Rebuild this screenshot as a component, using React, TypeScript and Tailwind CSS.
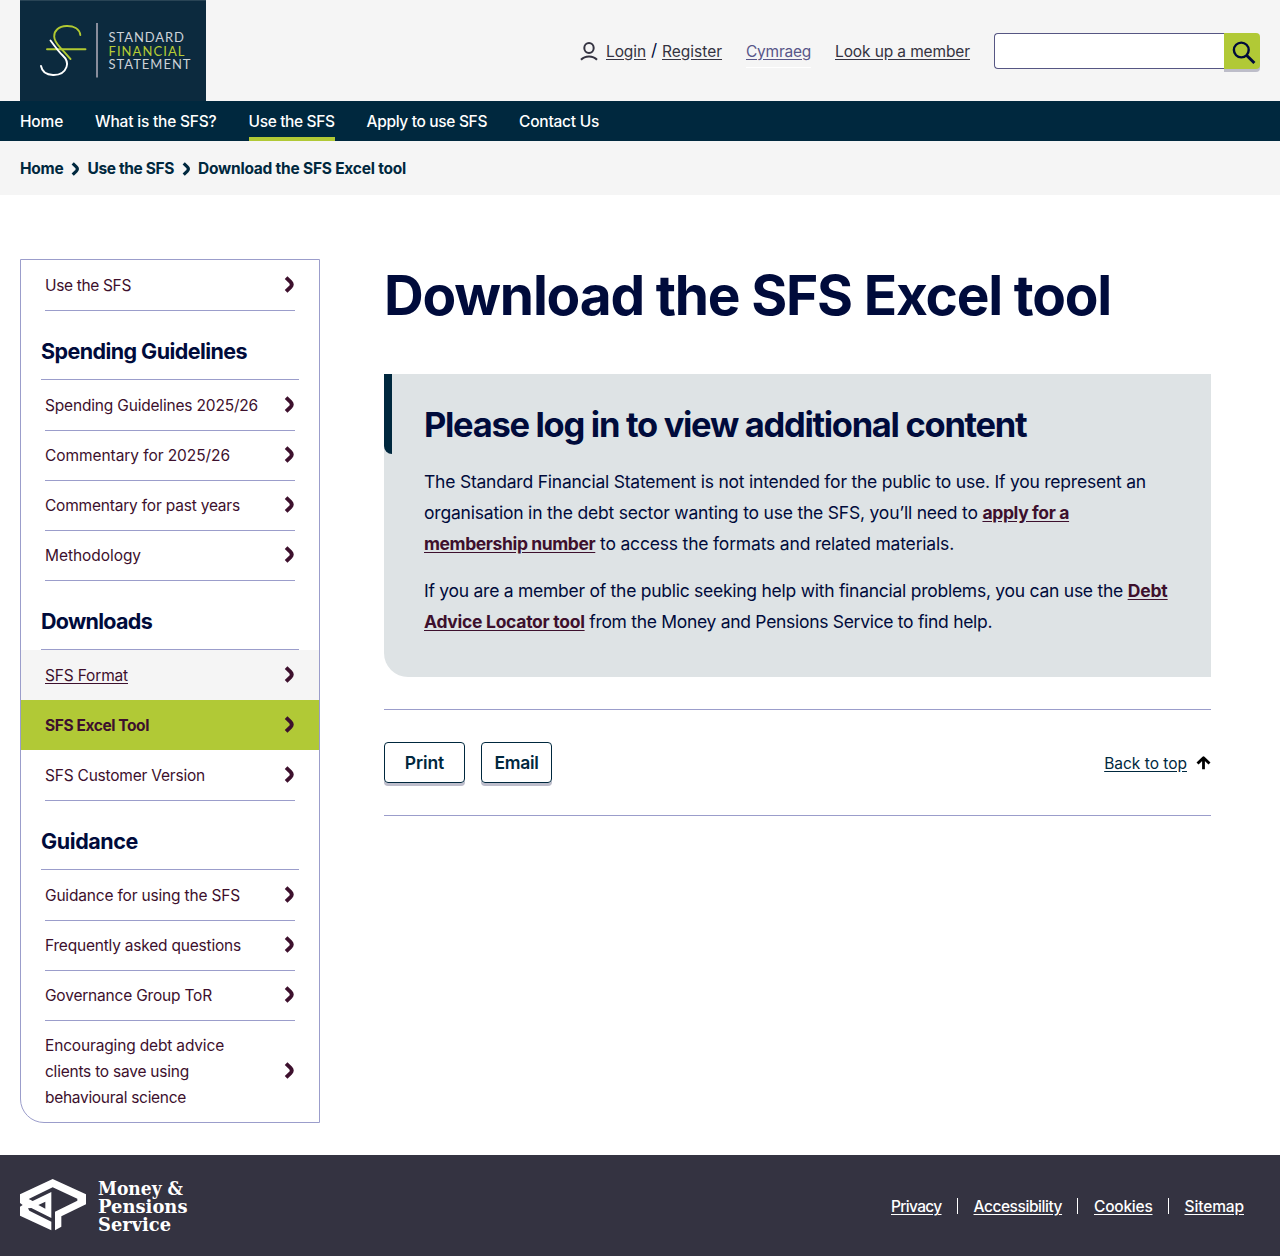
import type { ReactNode } from "react";

type Entry = { label: ReactNode; tracking: string; state?: "hover" | "active"; tall?: boolean };

const nav = [
  { label: "Home", tracking: "tracking-[-0.17px]" },
  { label: "What is the SFS?", tracking: "tracking-[-0.2px]" },
  { label: "Use the SFS", tracking: "tracking-[-0.371px]", current: true },
  { label: "Apply to use SFS", tracking: "tracking-[-0.338px]" },
  { label: "Contact Us", tracking: "tracking-[-0.239px]" },
];

const intro: Entry[] = [{ label: "Use the SFS", tracking: "tracking-[-0.345px]" }];

const sections: { title: string; tracking: string; entries: Entry[] }[] = [
  {
    title: "Spending Guidelines",
    tracking: "tracking-[-0.572px]",
    entries: [
      { label: "Spending Guidelines 2025/26", tracking: "tracking-[-0.182px]" },
      { label: "Commentary for 2025/26", tracking: "tracking-[-0.068px]" },
      { label: "Commentary for past years", tracking: "tracking-[-0.201px]" },
      { label: "Methodology", tracking: "tracking-[-0.057px]" },
    ],
  },
  {
    title: "Downloads",
    tracking: "tracking-[-0.71px]",
    entries: [
      { label: "SFS Format", tracking: "tracking-[-0.167px]", state: "hover" },
      { label: "SFS Excel Tool", tracking: "tracking-[-0.41px]", state: "active" },
      { label: "SFS Customer Version", tracking: "tracking-[-0.213px]" },
    ],
  },
  {
    title: "Guidance",
    tracking: "tracking-[-0.404px]",
    entries: [
      { label: "Guidance for using the SFS", tracking: "tracking-[-0.179px]" },
      { label: "Frequently asked questions", tracking: "tracking-[-0.208px]" },
      { label: "Governance Group ToR", tracking: "tracking-[-0.194px]" },
      {
        label: (
          <>
            <span className="tracking-[-0.16px]">Encouraging debt advice</span>
            <br />
            <span className="tracking-[-0.23px]">clients to save using</span>
            <br />
            <span className="tracking-[-0.296px]">behavioural science</span>
          </>
        ),
        tracking: "",
        tall: true,
      },
    ],
  },
];

const footerLinks = [
  { label: "Privacy", box: "w-[50.5px]", tracking: "tracking-[-0.674px]" },
  { label: "Accessibility", box: "w-[88.5px]", tracking: "tracking-[-0.44px]" },
  { label: "Cookies", box: "w-[58.5px]", tracking: "tracking-[-0.232px]" },
  { label: "Sitemap", box: "w-[59.5px]", tracking: "tracking-[-0.116px]" },
];

function Chevron({ className }: { className: string }) {
  return (
    <svg viewBox="0 0 10 17" className={className} fill="none" stroke="currentColor" strokeWidth="3.8">
      <path d="M1.6 1.6 L6 5.9 Q8.5 8.5 6 11.1 L1.6 15.4" />
    </svg>
  );
}

function SfsLogo() {
  return (
    <svg width="186" height="101" viewBox="0 0 186 101" className="block bg-[#0c2a3e]">
      <path d="M0 .5H186" stroke="#294455" />
      <g fill="none" strokeWidth="1.9" strokeLinecap="round">
        <path d="M27 49.2H65.5" stroke="#b1c932" />
        <path d="M60.3 35 C59.5 28.5 53.5 25.8 46.5 26 C38.5 26.3 34 31 34.2 36.5 C34.4 41.5 37.2 44.2 40.5 47.8 C44 51.6 47 55.5 50.5 59" stroke="#b1c932" />
        <path d="M30.5 40.5 C34 45 38 51 42.5 55.3 C46.5 59 48.2 62.5 46.5 67 C44.5 72.5 39 75.2 33 75 C26.5 74.8 22 71.5 21 66" stroke="#fff" />
      </g>
      <path d="M77 23V77.5" stroke="#b3afbc" strokeWidth="1.5" />
      <g fontFamily="Lato, sans-serif" fontSize="13" fontWeight="400">
        <text x="88.5" y="41.8" textLength="75.5" lengthAdjust="spacing" fill="#ccd2d8">STANDARD</text>
        <text x="88.5" y="55.5" textLength="76" lengthAdjust="spacing" fill="#b6cc35">FINANCIAL</text>
        <text x="88.5" y="69.1" textLength="82" lengthAdjust="spacing" fill="#ccd2d8">STATEMENT</text>
      </g>
    </svg>
  );
}

function MapsLogo() {
  return (
    <svg width="168" height="56" viewBox="0 0 168 56" className="block" fill="#fff">
      <path
        transform="translate(-4 -2) scale(.33333)"
        fillRule="evenodd"
        d="M12 55 L110 9 L210 55 V85 L136 121 V152 L117 163 V107 L184 74 V68 L110 34 L38 69 L50 75 L106 48 V126 L46 96 L36 97 L40 104 L106 137 V163 L12 119 V92 L20 87 L12 81 Z M88 77 L67 87 L88 98 Z"
      />
      <g fontFamily="'DejaVu Serif', serif" fontSize="18.2" fontWeight="700">
        <text x="78" y="16.8" textLength="85" lengthAdjust="spacingAndGlyphs">Money &amp;</text>
        <text x="78" y="34.8" textLength="89.5" lengthAdjust="spacingAndGlyphs">Pensions</text>
        <text x="78" y="52.8" textLength="73" lengthAdjust="spacingAndGlyphs">Service</text>
      </g>
    </svg>
  );
}

function SideItem({ entry, last }: { entry: Entry; last?: boolean }) {
  const bg = entry.state === "active" ? "bg-[#b1c936]" : entry.state === "hover" ? "bg-[#f5f5f5]" : "";
  const text = entry.state === "active" ? "font-bold" : entry.state === "hover" ? "underline underline-offset-2" : "";
  const line = entry.state || last ? "" : "border-b border-[#9b9dcb]";
  return (
    <li className={`px-6 ${entry.tall ? "h-[102px]" : "h-[50px]"} ${bg}`}>
      <a className={`flex items-center justify-between ${entry.tall ? "h-[102px]" : entry.state ? "h-[50px]" : "h-[51px]"} ${line}`}>
        <span className={`pt-0.5 leading-[26px] ${text} ${entry.tracking}`}>{entry.label}</span>
        <Chevron className="mb-px h-[17px] w-[11px]" />
      </a>
    </li>
  );
}

export default function App() {
  return (
    <div className="flex h-[1256px] flex-col bg-white font-['Inter',sans-serif] text-[15.5px] text-[#000b3b]">
      <header className="flex h-[101px] justify-between bg-[#f5f5f5] px-5">
        <SfsLogo />
        <div className="flex h-[102px] items-center text-[#343341]">
          <svg width="18" height="19" viewBox="0 0 18 19" fill="none" stroke="currentColor" strokeWidth="2" className="mr-2">
            <ellipse cx="9" cy="6" rx="4.7" ry="4.9" />
            <path d="M1 17.7 C5 13.4 13 13.4 17 17.7" />
          </svg>
          <a className="w-10 pt-px tracking-[-0.097px] underline underline-offset-2">Login</a>
          <span className="w-4 text-center text-[17px] text-[#000b3b]">/</span>
          <a className="w-[60px] pt-px underline underline-offset-2">Register</a>
          <a className="ml-6 h-[34px] w-[65px] border-b border-white leading-[35px] tracking-[-0.243px] text-[#585689] underline underline-offset-2">Cymraeg</a>
          <a className="ml-6 w-[135px] pt-px tracking-[-0.116px] whitespace-nowrap underline underline-offset-2">Look up a member</a>
          <div className="ml-6 flex h-9">
            <div className="w-[230px] rounded-l border border-r-0 border-[#565683] bg-white" />
            <button className="flex w-9 items-center justify-center rounded-r bg-[#b1c936] text-[#000b3b] shadow-[0_3px_0_#bdbdc9]">
              <svg width="24" height="24" viewBox="0 0 24 24" fill="none" stroke="currentColor" className="mt-[3px] ml-[3px]">
                <circle cx="9.3" cy="9" r="7.4" strokeWidth="2.4" />
                <path d="M14.5 14.3 L22.4 22" strokeWidth="3" />
              </svg>
            </button>
          </div>
        </div>
      </header>

      <nav className="flex h-10 gap-8 bg-[#00283e] px-5 font-medium text-white">
        {nav.map((n) => (
          <a key={n.label} className={`h-10 leading-[41px] whitespace-nowrap ${n.tracking} ${n.current ? "border-b-4 border-[#b1c936]" : ""}`}>
            {n.label}
          </a>
        ))}
      </nav>

      <div className="flex h-[54px] items-center bg-[#f5f5f5] px-5 pt-px font-bold text-[#00283e]">
        <span className="w-[43.5px] tracking-[-0.242px]">Home</span>
        <Chevron className="mx-[7.5px] h-[14px] w-[9px]" />
        <span className="w-[86.5px] tracking-[-0.372px]">Use the SFS</span>
        <Chevron className="mx-[7.5px] h-[14px] w-[9px]" />
        <span className="tracking-[-0.223px]">Download the SFS Excel tool</span>
      </div>

      <div className="flex flex-1 items-start px-5 pt-16">
        <aside className="w-[300px] rounded-bl-3xl border border-[#9b9dcb] text-[#3d102d]">
          <ul>
            {intro.map((e, i) => (
              <SideItem key={i} entry={e} />
            ))}
          </ul>
          {sections.map((s, si) => (
            <section key={s.title}>
              <h3 className={`mx-5 h-[70px] border-b border-[#9b9dcb] pt-[25px] text-[21.5px] leading-8 font-bold text-[#000b3b] ${s.tracking}`}>{s.title}</h3>
              <ul>
                {s.entries.map((e, i) => (
                  <SideItem key={i} entry={e} last={si === 2 && i === s.entries.length - 1} />
                ))}
              </ul>
            </section>
          ))}
        </aside>

        <main className="ml-16 w-[827px]">
          <h1 className="h-[115px] pt-[3px] text-[55px] leading-[66px] font-bold tracking-[-1.2px] whitespace-nowrap">Download the SFS Excel tool</h1>
          <section className="flex h-[303px] rounded-bl-3xl bg-[#dee3e5]">
            <div className="h-20 w-2 shrink-0 rounded-bl-lg bg-[#00283e]" />
            <div className="pl-8 text-[17.5px] leading-[31px] whitespace-nowrap">
              <h2 className="mt-[30px] mb-5 text-[34.5px] leading-[42px] font-bold tracking-[-1.3px]">Please log in to view additional content</h2>
              <p className="tracking-[-0.217px]">
                The Standard Financial Statement is not intended for the public to use. If you represent an
                <br />
                <span className="tracking-[-0.2px]">organisation in the debt sector wanting to use the SFS, you’ll need to </span>
                <a className="font-bold tracking-[-0.36px] text-[#3d102d] underline underline-offset-2">apply for a</a>
                <br />
                <a className="font-bold tracking-[-0.39px] text-[#3d102d] underline underline-offset-2">membership number</a>
                <span className="tracking-[-0.18px]"> to access the formats and related materials.</span>
              </p>
              <p className="mt-4 tracking-[-0.259px]">
                If you are a member of the public seeking help with financial problems, you can use the{" "}
                <a className="font-bold tracking-[-0.129px] text-[#3d102d] underline underline-offset-2">Debt</a>
                <br />
                <a className="font-bold tracking-[-0.28px] text-[#3d102d] underline underline-offset-2">Advice Locator tool</a>
                <span className="tracking-[-0.298px]"> from the Money and Pensions Service to find help.</span>
              </p>
            </div>
          </section>
          <div className="mt-8 flex h-[107px] items-center border-y border-[#9b9dcb] text-[#00283e]">
            <button className="h-[41px] w-[81px] rounded border border-[#00283e] pt-px text-[17.5px] font-semibold tracking-[-0.1px] shadow-[0_3px_0_#bdbdcb]">Print</button>
            <button className="ml-4 h-[41px] w-[71px] rounded border border-[#00283e] pt-px text-[17.5px] font-semibold tracking-[-0.3px] shadow-[0_3px_0_#bdbdcb]">Email</button>
            <a className="mr-[9px] ml-auto pt-0.5 underline underline-offset-2">Back to top</a>
            <svg width="15" height="14" viewBox="0 0 15 14" fill="none" stroke="#000" strokeWidth="2.8">
              <path d="M7.5 13.2V2.2M1.5 7.6L7.5 1.8L13.5 7.6" strokeLinejoin="round" />
            </svg>
          </div>
        </main>
      </div>

      <footer className="flex h-[101px] items-center justify-between bg-[#343341] pr-9 pl-5 text-white">
        <MapsLogo />
        <div className="flex items-center font-medium">
          {footerLinks.map((l, i) => (
            <div key={l.label} className="flex items-center">
              {i > 0 && <span className="mr-4 ml-[15px] h-4 w-px bg-white" />}
              <a className={`mt-[3px] underline underline-offset-2 ${l.box} ${l.tracking}`}>{l.label}</a>
            </div>
          ))}
        </div>
      </footer>
    </div>
  );
}
